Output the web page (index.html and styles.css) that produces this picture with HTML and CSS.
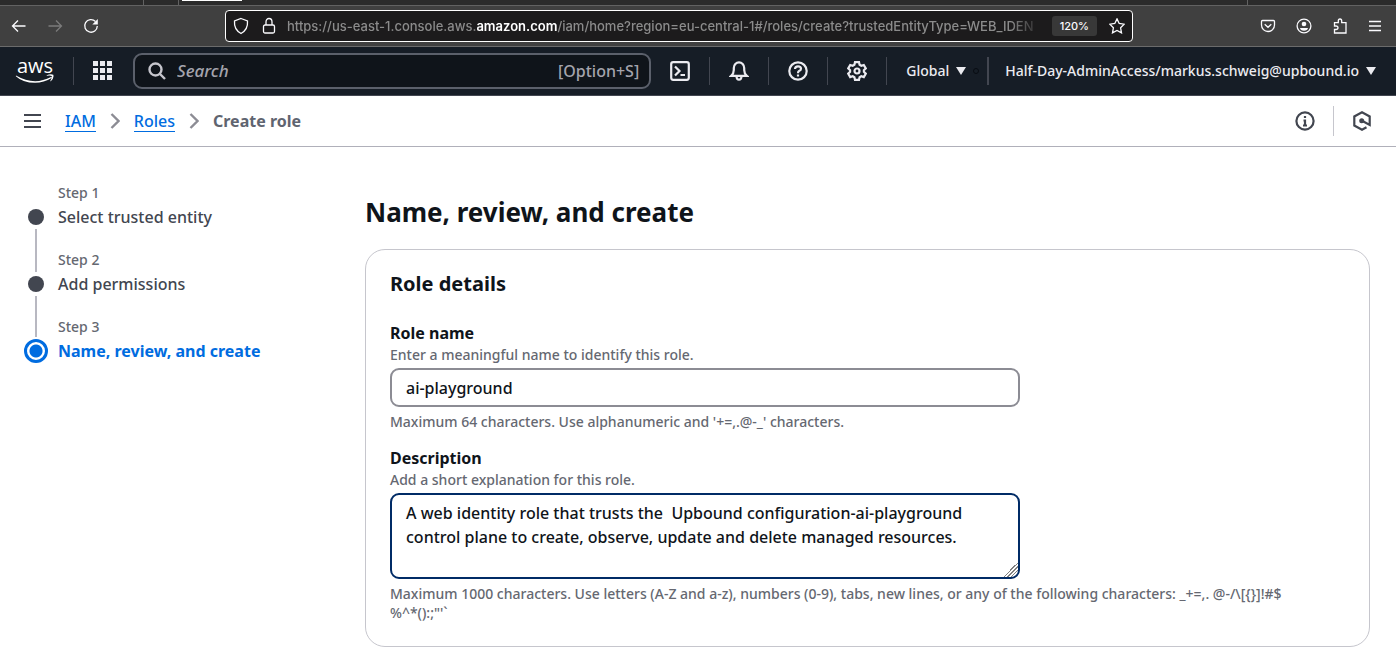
FILE: index.html
```html
<!DOCTYPE html>
<html lang="en">
<head>
<meta charset="utf-8">
<title>Create role | IAM</title>
<link rel="stylesheet" href="styles.css">
</head>
<body>
<div class="browser">
  <div class="tabs"><span class="tab-a"></span><span class="tab-b"></span><span class="tab-c"></span><span class="tab-d"></span></div>
  <div class="toolbar">
    <div class="nav-buttons">
      <button class="icon-btn" aria-label="Back"><svg width="16" height="16" viewBox="0 0 16 16"><path d="M14.500 8H1.500M7 2.500L1.500 8L7 13.500"/></svg></button>
      <button class="icon-btn dim" aria-label="Forward"><svg width="16" height="16" viewBox="0 0 16 16"><path d="M1.500 8H14.500M9 2.500L14.500 8L9 13.500"/></svg></button>
      <button class="icon-btn" aria-label="Reload"><svg width="16" height="16" viewBox="0 0 16 16"><path d="M12.500 3.500A6.300 6.300 0 1 0 14.300 8"/><path class="solid" d="M14.800 1V6.500H9.300Z"/></svg></button>
    </div>
    <div class="urlbar">
      <svg width="16" height="18" viewBox="0 0 16 18"><path d="M8 1.500L14.500 4C15 10 12.500 14 8 16.500C3.500 14 1 10 1.500 4Z"/></svg>
      <svg width="14" height="18" viewBox="0 0 14 18"><rect x="1.500" y="8" width="11" height="8" rx="1.500"/><path d="M4 8V5A3 3.500 0 0 1 10 5V8"/></svg>
      <div class="url">https://us-east-1.console.aws.<b>amazon.com</b>/iam/home?region=eu-central-1#/roles/create?trustedEntityType=WEB_IDEN</div>
      <button class="zoom">120%</button>
      <button class="icon-btn" aria-label="Bookmark"><svg width="16" height="16" viewBox="0 0 16 16"><path d="M8 .9L10.200 5.500L15.200 6.200L11.600 9.800L12.500 14.900L8 12.500L3.500 14.900L4.400 9.800L.8 6.200L5.800 5.500Z"/></svg></button>
    </div>
    <div class="tools">
      <button class="icon-btn" aria-label="Pocket"><svg width="16" height="16" viewBox="0 0 16 16"><path d="M2.500 2.500H13.500Q14.500 2.500 14.500 3.500V7A6.500 6.500 0 0 1 1.500 7V3.500Q1.500 2.500 2.500 2.500ZM4.700 6.300L8 9.300L11.300 6.300"/></svg></button>
      <button class="icon-btn" aria-label="Account"><svg width="16" height="16" viewBox="0 0 16 16"><circle cx="8" cy="8" r="6.900"/><circle class="solid" cx="8" cy="6" r="2.300"/><path class="solid" d="M4 10H12Q11.500 12.800 8 12.800Q4.500 12.800 4 10Z"/></svg></button>
      <button class="icon-btn" aria-label="Extensions"><svg width="16" height="16" viewBox="0 0 16 16"><path d="M2.500 15V11.500H4Q6 11.500 6 9.700Q6 8 4 8H2.500V4.700H6.300V3Q6.300 1 8 1Q9.700 1 9.700 3V4.700H14V15Z"/></svg></button>
      <button class="icon-btn" aria-label="Menu"><svg width="14" height="14" viewBox="0 0 14 14"><path d="M1 2.500H13M1 7H13M1 11.500H13"/></svg></button>
    </div>
  </div>
</div>

<header class="aws-nav">
  <a class="logo" href="#" aria-label="AWS home"><span>aws</span><svg width="40" height="10" viewBox="0 0 40 10"><path d="M1 1.500Q19 12 36 3Q37.500 2.500 36.500 4Q29 8.800 20 8.800Q8 8.800 .8 2.200Z"/><path d="M31.500 1.200Q36 -.5 38.300 .8Q39.300 4 35.800 7.300Q35 7.500 35.500 6.500Q37.300 3 36.600 2Q35.500 1.200 32 1.800Z"/></svg></a>
  <span class="sep"></span>
  <button class="nav-icon" aria-label="Services"><svg class="fill" width="20" height="20" viewBox="0 0 20 20"><path d="M0 0h5v5H0zM7 0h5v5H7zM14 0h5v5h-5zM0 7h5v5H0zM7 7h5v5H7zM14 7h5v5h-5zM0 14h5v5H0zM7 14h5v5H7zM14 14h5v5h-5z"/></svg></button>
  <label class="search">
    <svg width="18" height="18" viewBox="0 0 18 18"><circle cx="7.500" cy="7.500" r="6"/><path d="M12 12L17 17"/></svg>
    <input type="text" placeholder="Search" aria-label="Search">
    <span>[Option+S]</span>
  </label>
  <button class="nav-icon" aria-label="CloudShell"><svg width="20" height="20" viewBox="0 0 20 20"><rect x="1.200" y="1.200" width="17.600" height="17.600" rx="2"/><path d="M5 5.500L9.500 10L5 14.500M10.500 14H15"/></svg></button>
  <span class="sep"></span>
  <button class="nav-icon" aria-label="Notifications"><svg width="20" height="20" viewBox="0 0 20 20"><path d="M2.200 14.800H17.800Q15.200 12.500 15.200 9V7A5.200 5.600 0 0 0 4.800 7V9Q4.800 12.500 2.200 14.800Z"/><path d="M7.500 15.500Q7.700 18.700 10 18.700Q12.300 18.700 12.500 15.500"/></svg></button>
  <span class="sep"></span>
  <button class="nav-icon" aria-label="Help"><svg width="20" height="20" viewBox="0 0 20 20"><circle cx="10" cy="10" r="8.700"/><path d="M7 8Q7 5.300 10 5.300Q13 5.300 13 7.800Q13 9.300 11 10Q10 10.500 10 12.200M10 13.500V15.500"/></svg></button>
  <span class="sep"></span>
  <button class="nav-icon" aria-label="Settings"><svg width="20" height="20" viewBox="0 0 20 20"><path d="M8 1.200H12L12.600 3.800L14.300 4.800L16.800 4L18.800 7.400L16.900 9.200V10.900L18.800 12.700L16.800 16.100L14.300 15.300L12.600 16.300L12 18.800H8L7.400 16.300L5.700 15.300L3.200 16.100L1.200 12.700L3.100 10.900V9.200L1.200 7.400L3.200 4L5.700 4.800L7.400 3.800Z"/><circle cx="10" cy="10" r="2.500"/></svg></button>
  <span class="sep"></span>
  <button class="menu region">Global <svg width="10" height="8" viewBox="0 0 10 8"><path d="M0 0H10L5 8Z"/></svg><i></i></button>
  <span class="sep wide"></span>
  <button class="menu">Half-Day-AdminAccess/markus.schweig@upbound.io <svg width="10" height="8" viewBox="0 0 10 8"><path d="M0 0H10L5 8Z"/></svg></button>
</header>

<div class="crumb-bar">
  <button class="nav-icon" aria-label="Open navigation"><svg width="18" height="16" viewBox="0 0 18 16"><path d="M0 2H17M0 8H17M0 14H17"/></svg></button>
  <nav class="crumbs" aria-label="Breadcrumbs">
    <a href="#">IAM</a>
    <svg width="10" height="16" viewBox="0 0 10 16"><path d="M1.500 1L8.500 8L1.500 15"/></svg>
    <a href="#">Roles</a>
    <svg width="10" height="16" viewBox="0 0 10 16"><path d="M1.500 1L8.500 8L1.500 15"/></svg>
    <b>Create role</b>
  </nav>
  <button class="nav-icon" aria-label="Info"><svg width="20" height="20" viewBox="0 0 20 20"><circle cx="10" cy="10" r="8.600"/><path d="M10 5V7M8.500 9.500H10V14.500M8 14.500H12"/></svg></button>
  <span class="crumb-sep"></span>
  <button class="nav-icon" aria-label="Assistant"><svg width="20" height="20" viewBox="0 0 20 20"><path d="M14.500 16.200L10 18.700L2.300 14.500V5.500L10 1.300L17.700 5.500V14L10 9.800"/><circle class="core" cx="9.700" cy="9.800" r="2.500"/></svg></button>
</div>

<div class="page">
  <ol class="steps">
    <li><span class="step-label">Step 1</span><span class="dot"></span><span class="step-title">Select trusted entity</span><span class="rail"></span></li>
    <li><span class="rail"></span><span class="step-label">Step 2</span><span class="dot"></span><span class="step-title">Add permissions</span><span class="rail"></span></li>
    <li class="current"><span class="rail"></span><span class="step-label">Step 3</span><span class="dot"></span><span class="step-title">Name, review, and create</span></li>
  </ol>
  <main>
    <h1>Name, review, and create</h1>
    <section class="card">
      <h2>Role details</h2>
      <div class="field">
        <label for="role-name">Role name</label>
        <p>Enter a meaningful name to identify this role.</p>
        <input id="role-name" type="text" value="ai-playground">
        <p>Maximum 64 characters. Use alphanumeric and '+=,.@-_' characters.</p>
      </div>
      <div class="field">
        <label for="description">Description</label>
        <p>Add a short explanation for this role.</p>
        <textarea id="description" rows="3">A web identity role that trusts the  Upbound configuration-ai-playground control plane to create, observe, update and delete managed resources.</textarea>
        <p>Maximum 1000 characters. Use letters (A-Z and a-z), numbers (0-9), tabs, new lines, or any of the following characters: _+=,. @-/\[{}]!#$<br>%^*():;"'`</p>
      </div>
    </section>
  </main>
</div>
</body>
</html>
```

FILE: styles.css
```css
* { box-sizing: border-box; }
body { margin: 0; background: #fff; color: #0f141a; font: 500 16px/24px "Noto Sans", "Open Sans", sans-serif; }
button { margin: 0; padding: 0; border: 0; background: none; color: inherit; font: inherit; display: flex; align-items: center; }
svg { display: block; flex: none; fill: none; stroke: currentColor; }
p, h1, h2 { margin: 0; }

.browser { background: #404040; border-bottom: 1px solid #6b6b6b; color: #fbfbfe; font-family: Inter, sans-serif; }
.tabs { display: flex; height: 6px; background: #2b2b2b; border-bottom: 1px solid #626262; }
.tab-a { width: 144px; border-right: 1px solid #626262; }
.tab-b { width: 35px; border-right: 1px solid #626262; }
.tab-c { width: 60px; height: 1px; margin-left: 3px; background: #fff; }
.tab-d { width: 149px; margin-left: auto; border-left: 1px solid #626262; }
.toolbar { display: flex; align-items: center; height: 40px; }
.toolbar svg { stroke-width: 1.3; }
.toolbar .solid { fill: currentColor; stroke: none; }
.nav-buttons { display: flex; gap: 20px; width: 225px; padding-left: 11px; }
.nav-buttons .dim { color: #7b7b7b; }
.urlbar { display: flex; align-items: center; flex: 1; min-width: 0; height: 32px; padding: 0 7px; border: 1px solid #fff; border-radius: 4px; background: #1c1b1c; }
.urlbar > svg + svg { margin-left: 13px; }
.url { flex: 1; min-width: 0; margin: 0 10px 0 11px; overflow: hidden; white-space: nowrap; color: #8b8b8b; font-size: 13px; font-weight: 500; mask-image: linear-gradient(to left, transparent, #000 32px); }
.url b { color: #fff; font-weight: 600; }
.zoom { height: 20px; margin-right: 12px; padding: 0 8px; border-radius: 3px; background: #383838; font-size: 11px; }
.tools { display: flex; gap: 20px; width: 263px; padding-right: 14px; justify-content: flex-end; }

.aws-nav { display: flex; align-items: center; height: 49px; padding: 0 20px 0 15px; border-bottom: 1px solid #424650; background: #161d26; color: #ebebf0; }
.logo { display: flex; flex-direction: column; align-items: center; color: #fff; text-decoration: none; font: 500 20px/16px "Open Sans", "Noto Sans", sans-serif; }
.logo svg { fill: #fff; stroke: none; }
.sep { width: 1px; height: 28px; margin: 0 19px; background: #424650; }
.sep.wide { width: 2px; margin-right: 16px; }
.logo + .sep { margin-left: 18px; }
.nav-icon svg { stroke-width: 2.2; }
.nav-icon .fill { fill: currentColor; stroke: none; }
.search { display: flex; align-items: center; flex: 1; min-width: 120px; height: 36px; margin: 0 19px 0 20px; padding: 0 10px 0 13px; border: 2px solid #5b606b; border-radius: 9px; background: #0f141a; color: #a4a4ad; font-size: 16px; }
.search svg { stroke: #c6c6cd; stroke-width: 2.4; }
.search input { flex: 1; min-width: 0; margin-left: 11px; padding: 0; border: 0; outline: 0; background: none; color: inherit; font: inherit; font-size: 17px; font-style: italic; }
.search input::placeholder { color: inherit; }
.menu { font-size: 14px; white-space: nowrap; gap: 7px; }
.menu svg { fill: currentColor; stroke: none; }
.region i { width: 6px; height: 6px; border: 1px solid #080c12; border-radius: 50%; }
.region + .sep { margin-left: 8px; }

.crumb-bar { display: flex; align-items: center; height: 51px; padding: 0 24px; border-bottom: 1px solid #b0b0ba; color: #424650; }
.crumbs { display: flex; align-items: center; flex: 1; gap: 14px; margin-left: 23px; color: #5f6470; }
.crumbs a { color: #006ce0; line-height: 20px; text-decoration: none; border-bottom: 1px solid #006ce0; }
.crumbs svg { stroke: #8c8c94; stroke-width: 2.4; }
.crumb-sep { width: 1px; height: 30px; margin: 0 18px; background: #c6c6cd; }
.crumb-bar .core { fill: currentColor; stroke: none; }

.page { display: grid; grid-template-columns: 317px minmax(0, 1fr); column-gap: 24px; padding: 36px 26px 7px 24px; }
.steps { margin: 0; padding: 0; list-style: none; color: #424650; }
.steps li { display: grid; grid-template: 22px 24px 21px / 24px 1fr; column-gap: 10px; justify-items: start; }
.step-label { grid-area: 1 / 2; color: #656871; font-size: 14px; line-height: 20px; }
.step-title { grid-area: 2 / 2; }
.dot { grid-area: 2 / 1; place-self: center; width: 16px; height: 16px; border-radius: 50%; background: #424650; }
.rail { grid-column: 1; grid-row: 1; justify-self: center; width: 2px; background: #b8b8c1; }
.dot ~ .rail { grid-row: 3; }
.current .rail { margin-bottom: 2px; }
.current .step-title { color: #006ce0; font-weight: 700; }
.current .dot { width: 24px; height: 24px; border: 3px solid #006ce0; background: radial-gradient(circle, #006ce0 6px, #fff 7px); }

h1 { padding-top: 12px; font-size: 26px; line-height: 34px; }
.card { margin-top: 20px; padding: 22px 24px 24px; border: 1px solid #c6c6cd; border-radius: 20px; }
h2 { font-size: 20px; line-height: 24px; }
.field { display: flex; flex-direction: column; margin-top: 25px; }
.field + .field { margin-top: 15px; }
.field label { font-weight: 700; }
.field p { color: #656871; font-size: 14px; line-height: 19px; }
.field input, .field textarea { width: 66%; margin: 4px 0 5px; padding: 6px 14px; border: 2px solid #8c8c94; border-radius: 9px; outline: 0; background: #fff; color: inherit; font: inherit; }
.field input { height: 39px; }
.field textarea { padding-bottom: 4px; border-color: #002b66; resize: both; }
.field textarea::-webkit-resizer { background: linear-gradient(135deg, transparent 50%, #808080 50% 55%, transparent 55% 62%, #808080 62% 67%, transparent 67% 74%, #808080 74% 79%, transparent 79%); }
```
